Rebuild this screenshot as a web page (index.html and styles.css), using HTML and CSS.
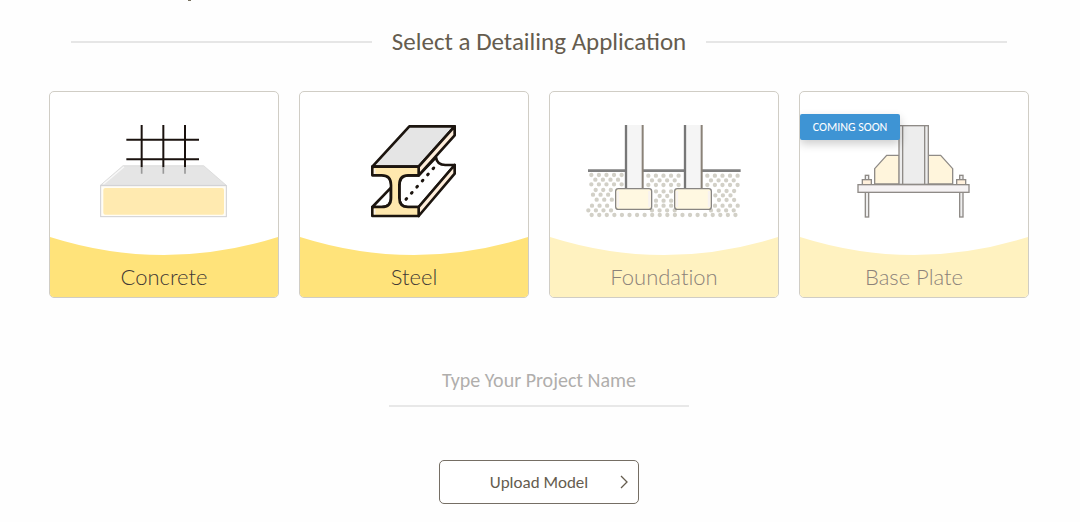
FILE: index.html
```html
<!DOCTYPE html>
<html lang="en">
<head>
<meta charset="utf-8">
<title>Select a Detailing Application</title>
<link rel="stylesheet" href="styles.css">
</head>
<body>
<main class="page">
  <div class="tick"></div>
  <h1 class="heading"><span>Select a Detailing Application</span></h1>
  <div class="cards">
    <button class="card" type="button">
      <svg class="art" viewBox="30 24 684 498" aria-hidden="true">
        <path class="wave" d="M30 459Q372 567 714 459V522H30Z"/>
        <path d="M181 304L249 245H491L559 304Z" fill="#e5e5e5" stroke="#d3d3d3" stroke-width="2"/>
        <path d="M190 301L252 248" stroke="#f8f8f8" stroke-width="4"/>
        <rect x="182" y="305" width="377" height="93" fill="#fffdf6" stroke="#cfcfd2" stroke-width="3"/>
        <rect x="190" y="312" width="362" height="80" rx="6" fill="#ffeab0"/>
        <g stroke="#1a120e" stroke-width="6"><path d="M305 123V250M370 123V250M435 123V250M259 167H477M259 226H477"/></g>
        <path d="M305 250V269M370 250V269M435 250V269" stroke="#999" stroke-width="5"/>
      </svg>
      <span class="label">Concrete</span>
    </button>
    <button class="card" type="button">
      <svg class="art" viewBox="30 24 684 498" aria-hidden="true">
        <path class="wave" d="M30 459Q372 567 714 459V522H30Z"/>
        <g stroke="#1c150f" stroke-width="8" fill="none" stroke-linejoin="round">
          <path d="M247 369L303 311V345Q303 369 275 369Z" fill="#fff"/>
          <path d="M386 274L438 220Q441 243 466 243H494L386 369H354Q328 369 328 342V305Q328 274 354 274Z" fill="#fff"/>
          <path d="M247 248L358 127H494L386 248Z" fill="#e5e5e5"/>
          <path d="M386 248L494 127V154L386 274Z" fill="#ffeedb"/>
          <path d="M386 369L494 243V269L386 396Z" fill="#ffeedb"/>
          <path d="M247 248H386V274H354Q328 274 328 303V342Q328 369 354 369H386V396H247V369H275Q303 369 303 342V303Q303 274 275 274H247Z" fill="#ffe8ae"/>
          <path d="M348 346L432 251" stroke-linecap="round" stroke-width="9" stroke-dasharray="3 21.5"/>
        </g>
        <path d="M254 254V270M254 375V391" stroke="#f5eee7" stroke-width="5"/>
      </svg>
      <span class="label">Steel</span>
    </button>
    <button class="card card--off" type="button" disabled>
      <svg class="art" viewBox="30 24 684 498" aria-hidden="true">
        <path class="wave" d="M30 459Q372 567 714 459V522H30Z"/>
        <g stroke="#d2d0c7" stroke-width="13" stroke-linecap="round" stroke-dasharray="0 22.7" fill="none">
          <path d="M154 273H246M325 275H418M502 275H594"/>
          <path d="M166 287H236M336 289H408M513 289H585"/>
          <path d="M154 301H246M325 303H418M502 303H594"/>
          <path d="M167 318H218M348 322H396M537 321H585"/>
          <path d="M159 332H210M359 336H385M526 334H575"/>
          <path d="M170 347H220M348 350H396M537 348H585"/>
          <path d="M156 365H210M348 365H396M525 365H594"/>
          <path d="M145 379H218M336 379H408M513 379H585"/>
          <path d="M155 393H600"/>
        </g>
        <path d="M144 260H602" stroke="#808080" stroke-width="8"/>
        <path d="M258 123H308V315H258ZM435 123H485V315H435Z" fill="#f5f5f5"/>
        <path d="M258 123V315M435 123V315" stroke="#777" stroke-width="7"/>
        <path d="M308 123V315M485 123V315" stroke="#8a8278" stroke-width="6"/>
        <g fill="#fff8e1" stroke="#888582" stroke-width="4"><rect x="227" y="314" width="108" height="62" rx="8"/><rect x="404" y="314" width="110" height="62" rx="8"/></g>
        <path d="M234 321V369M328 321V369M411 321V369M507 321V369" stroke="#f8f3f0" stroke-width="7"/>
      </svg>
      <span class="label">Foundation</span>
    </button>
    <button class="card card--off" type="button" disabled>
      <svg class="art" viewBox="30 24 684 498" aria-hidden="true">
        <path class="wave" d="M30 459Q372 567 714 459V522H30Z"/>
        <g stroke="#8f8b87" stroke-width="4">
          <path d="M254 300V254L290 214H328V300ZM414 214H452L488 254V300H414Z" fill="#fff5dc"/>
          <rect x="327" y="125" width="88" height="176" fill="#ededed"/>
          <path d="M338 125V301M404 125V301" fill="none"/>
          <rect x="226" y="325" width="10" height="74" fill="#eee"/>
          <rect x="509" y="325" width="10" height="74" fill="#eee"/>
          <rect x="226" y="274" width="10" height="14" fill="#eee"/>
          <rect x="509" y="274" width="10" height="14" fill="#eee"/>
          <rect x="217" y="287" width="27" height="15" fill="#fff0dc"/>
          <rect x="500" y="287" width="27" height="15" fill="#fff0dc"/>
          <rect x="204" y="302" width="333" height="23" fill="#f5f2f3"/>
        </g>
      </svg>
      <span class="label">Base Plate</span>
      <span class="badge">COMING SOON</span>
    </button>
  </div>
  <form class="form">
    <input class="name" type="text" aria-label="Project name" placeholder="Type Your Project Name">
    <button class="upload" type="button">
      <span>Upload Model</span>
      <svg class="chevron" viewBox="0 0 8 14" aria-hidden="true"><path d="M1 1L7 7L1 13" fill="none" stroke="currentColor" stroke-width="1.3"/></svg>
    </button>
  </form>
</main>
</body>
</html>
```
FILE: styles.css
```css
* { box-sizing: border-box; }
body {
  margin: 0;
  background: #fefefe;
  color: #655c4e;
  font-family: Carlito, Calibri, "Open Sans", sans-serif;
}
.page {
  display: flex;
  flex-direction: column;
  align-items: center;
  padding: 0 2px 18px 0;
}
.tick {
  align-self: flex-start;
  width: 3px;
  height: 1px;
  margin-left: 188px;
  background: #77705f;
}
.heading {
  display: flex;
  align-items: center;
  justify-content: center;
  gap: 20px;
  width: 100%;
  max-width: 936px;
  margin: 25px 0 33px;
  font-size: 25px;
  font-weight: 400;
  line-height: 32px;
  white-space: nowrap;
}
.heading::before,
.heading::after {
  content: "";
  flex: 1;
  height: 2px;
  background: #e6e6e6;
}
.cards {
  display: flex;
  flex-wrap: wrap;
  justify-content: center;
  gap: 20px;
}
.card {
  position: relative;
  display: flex;
  flex-direction: column;
  width: 230px;
  padding: 0;
  overflow: hidden;
  border: 1px solid #d0cdc5;
  border-radius: 5px;
  background: #fff;
  color: #3f3935;
  font-family: Lato, sans-serif;
  font-weight: 300;
  font-size: 22px;
  font-variant-ligatures: none;
}
.art { display: block; width: 100%; }
.wave { fill: #ffe37a; }
.label {
  width: 100%;
  padding-bottom: 1px;
  background: #ffe37a;
  line-height: 38px;
}
.card--off { color: #8c827a; }
.card--off .wave { fill: #fff2c0; }
.card--off .label { background: #fff2c0; }
.badge {
  position: absolute;
  top: 22px;
  left: 0;
  width: 100px;
  border-radius: 2px;
  background: #3e94d4;
  box-shadow: 0 4px 10px rgba(0, 0, 0, .2);
  color: #fff;
  font-family: Carlito, Calibri, "Open Sans", sans-serif;
  font-weight: 400;
  font-size: 12px;
  line-height: 26px;
}
.form {
  display: flex;
  flex-direction: column;
  align-items: center;
  gap: 53px;
  margin-top: 57px;
}
.name {
  width: 300px;
  height: 52px;
  padding: 0;
  border: 0;
  border-bottom: 2px solid #e8e8e8;
  background: transparent;
  color: inherit;
  font: inherit;
  font-size: 20px;
  text-align: center;
}
.name::placeholder { color: #b0aeac; opacity: 1; }
.upload {
  display: grid;
  grid-template-columns: 1fr auto 1fr;
  align-items: center;
  width: 200px;
  height: 44px;
  padding: 0 10px;
  border: 1px solid #756e64;
  border-radius: 5px;
  background: #fff;
  color: inherit;
  font: inherit;
  font-size: 17px;
}
.upload span { grid-column: 2; }
.chevron { justify-self: end; width: 8px; height: 14px; }
```
